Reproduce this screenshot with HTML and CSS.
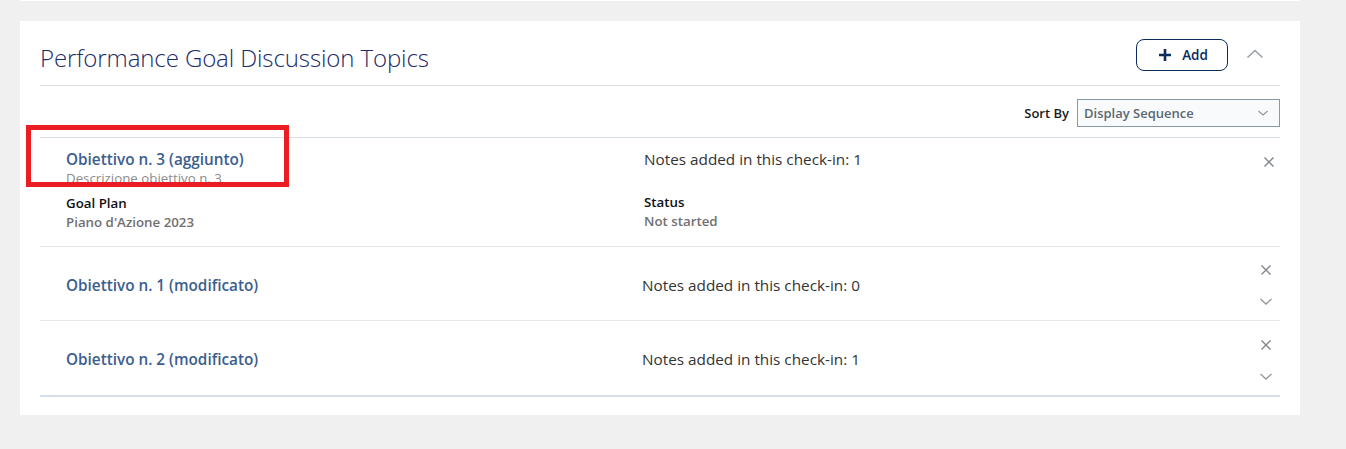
FILE: index.html
```html
<!DOCTYPE html>
<html>
<head>
<meta charset="utf-8">
<link rel="stylesheet" href="styles.css">
</head>
<body>
<div class="prev"></div>
<section class="card">
  <header class="card-head">
    <h1 class="title">Performance Goal Discussion Topics</h1>
    <div class="head-actions">
      <button class="btn-add">
        <svg width="14" height="14" viewBox="0 0 14 14"><path d="M7 1v12M1 7h12" stroke="#0b2b5e" stroke-width="2.6" fill="none"/></svg>
        <span>Add</span>
      </button>
      <svg class="collapse" width="18" height="12" viewBox="0 0 18 12"><path d="M1.5 9.5L9 2.5l7.5 7" stroke="#9aa1a8" stroke-width="1.6" fill="none"/></svg>
    </div>
  </header>
  <div class="sort-row">
    <span class="sort-label">Sort By</span>
    <div class="select">
      <span>Display Sequence</span>
      <svg width="12" height="8" viewBox="0 0 12 8"><path d="M1.5 2l4.5 4 4.5-4" stroke="#8a949c" stroke-width="1.1" fill="none"/></svg>
    </div>
  </div>
  <div class="topic topic-open">
    <div class="col-left">
      <a class="topic-title">Obiettivo n. 3 (aggiunto)</a>
      <div class="desc">Descrizione obiettivo n. 3</div>
      <div class="field-label">Goal Plan</div>
      <div class="field-value">Piano d'Azione 2023</div>
    </div>
    <div class="col-right">
      <div class="notes">Notes added in this check-in: 1</div>
      <div class="field-label status-label">Status</div>
      <div class="field-value">Not started</div>
    </div>
    <div class="col-actions first">
      <svg class="x" width="12" height="12" viewBox="0 0 12 12"><path d="M1.5 1.5l9 9M10.5 1.5l-9 9" stroke="#80868c" stroke-width="1.4"/></svg>
    </div>
  </div>
  <div class="topic">
    <div class="col-left"><a class="topic-title">Obiettivo n. 1 (modificato)</a></div>
    <div class="col-right"><div class="notes">Notes added in this check-in: 0</div></div>
    <div class="col-actions">
      <svg class="x" width="12" height="12" viewBox="0 0 12 12"><path d="M1.5 1.5l9 9M10.5 1.5l-9 9" stroke="#80868c" stroke-width="1.4"/></svg>
      <svg class="chev" width="14" height="9" viewBox="0 0 14 9"><path d="M1.5 2l5.5 5 5.5-5" stroke="#90979d" stroke-width="1.3" fill="none"/></svg>
    </div>
  </div>
  <div class="topic last">
    <div class="col-left"><a class="topic-title">Obiettivo n. 2 (modificato)</a></div>
    <div class="col-right"><div class="notes">Notes added in this check-in: 1</div></div>
    <div class="col-actions">
      <svg class="x" width="12" height="12" viewBox="0 0 12 12"><path d="M1.5 1.5l9 9M10.5 1.5l-9 9" stroke="#80868c" stroke-width="1.4"/></svg>
      <svg class="chev" width="14" height="9" viewBox="0 0 14 9"><path d="M1.5 2l5.5 5 5.5-5" stroke="#90979d" stroke-width="1.3" fill="none"/></svg>
    </div>
  </div>
  <div class="highlight"></div>
</section>
</body>
</html>
```
FILE: styles.css
```css
* { box-sizing: border-box; }
body {
  margin: 0;
  background: #f0f0f0;
  font-family: "Open Sans", "Noto Sans", sans-serif;
  color: #333;
}
.prev {
  width: 1280px;
  height: 1px;
  margin-left: 20px;
  background: #fff;
}
.card {
  position: relative;
  width: 1280px;
  margin: 20px 0 0 20px;
  background: #fff;
  padding: 0 20px 18px;
}
.card-head {
  height: 65px;
  display: flex;
  align-items: center;
  justify-content: space-between;
  border-bottom: 1px solid #d8dfe6;
  padding-top: 9px;
}
.title {
  margin: 0;
  font-weight: 300;
  font-size: 24px;
  color: #1c2a66;
  letter-spacing: -0.1px;
}
.head-actions {
  display: flex;
  align-items: center;
  gap: 18px;
  margin-top: -5px;
}
.btn-add {
  width: 92px;
  height: 32px;
  border: 1px solid #0b2b5e;
  border-radius: 8px;
  background: #fff;
  display: flex;
  align-items: center;
  justify-content: center;
  gap: 10px;
  font-family: inherit;
  font-weight: 600;
  font-size: 13.5px;
  color: #0b2b5e;
  padding: 0 0 0 2px;
}
.collapse { margin-right: 16px; margin-top: -2px; }
.sort-row {
  height: 52px;
  display: flex;
  align-items: center;
  justify-content: flex-end;
  gap: 8px;
  border-bottom: 1px solid #d8dfe6;
  padding-top: 3px;
}
.sort-label {
  font-size: 13px;
  font-weight: 600;
  color: #1a1a1a;
}
.select {
  width: 203px;
  height: 28px;
  border: 1px solid #8a98a6;
  background: #f8fafc;
  display: flex;
  align-items: center;
  justify-content: space-between;
  padding: 0 10px 0 6px;
  font-size: 13px;
  font-weight: 600;
  color: #5d6670;
}
.topic {
  display: flex;
  border-bottom: 1px solid #e6e9ec;
  height: 74px;
  align-items: center;
  padding-top: 2px;
}
.topic.topic-open {
  height: 109px;
  align-items: flex-start;
  padding-top: 11px;
}
.topic.last {
  height: 76px;
  border-bottom: 2px solid #d6dfe8;
}
.col-left {
  width: 603px;
  padding-left: 26px;
}
.col-right {
  flex: 1;
}
.topic-open .col-right { padding-left: 1px; }
.topic-title {
  display: block;
  font-size: 15.3px;
  font-weight: 600;
  color: #3b5e8f;
  line-height: 20px;
}
.desc {
  font-size: 13.3px;
  color: #8c8c8c;
  line-height: 19px;
  margin-bottom: 6px;
}
.notes {
  font-size: 15.3px;
  color: #333;
  line-height: 20px;
}
.topic:not(.topic-open) .notes { margin-left: -1px; }
.field-label {
  font-size: 13.3px;
  font-weight: 600;
  color: #111;
  line-height: 18px;
}
.status-label { margin-top: 24px; }
.field-value {
  font-size: 13.3px;
  font-weight: 600;
  color: #707070;
  line-height: 20px;
}
.col-actions {
  width: 40px;
  display: flex;
  flex-direction: column;
  align-items: center;
  gap: 21px;
  padding-left: 12px;
  margin-top: 1px;
}
.col-actions.first { padding-top: 7px; padding-left: 18px; margin-top: 0; }
.highlight {
  position: absolute;
  left: 6px;
  top: 104px;
  width: 263px;
  height: 62px;
  border: 5px solid #ea1c24;
  pointer-events: none;
}
```
